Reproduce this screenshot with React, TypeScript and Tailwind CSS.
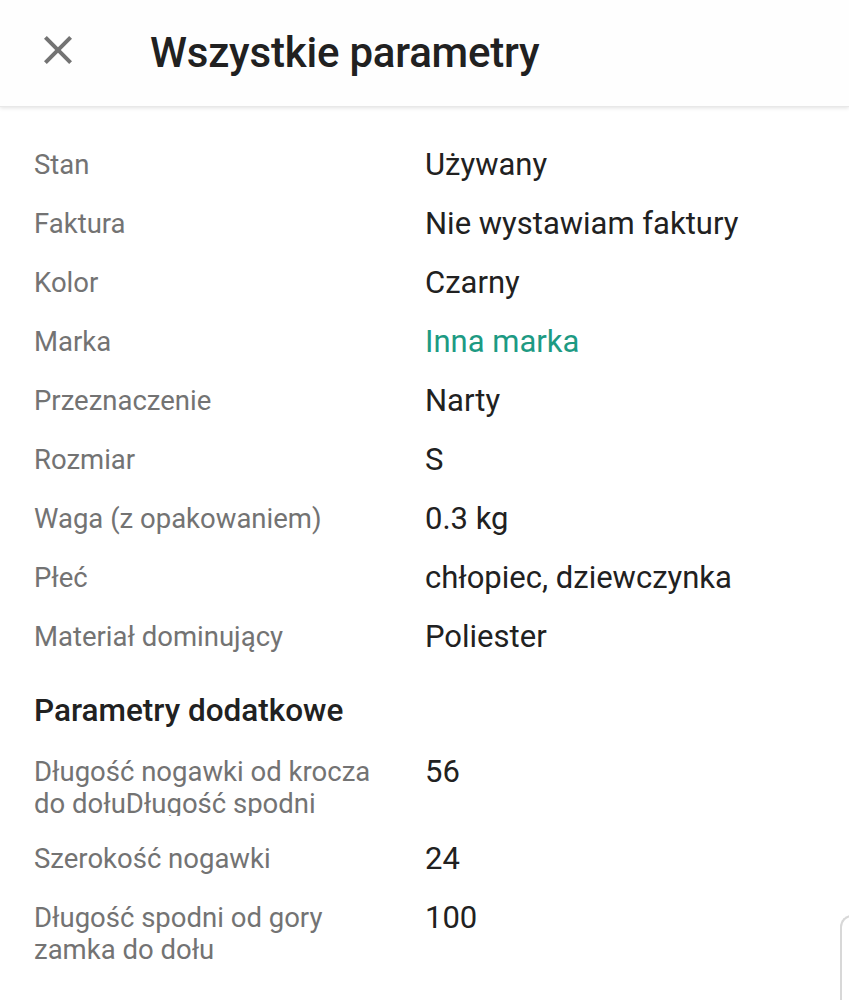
import React from "react";

type Param = { label: string; value: string; link?: boolean };

const MAIN: Param[] = [
  { label: "Stan", value: "Używany" },
  { label: "Faktura", value: "Nie wystawiam faktury" },
  { label: "Kolor", value: "Czarny" },
  { label: "Marka", value: "Inna marka", link: true },
  { label: "Przeznaczenie", value: "Narty" },
  { label: "Rozmiar", value: "S" },
  { label: "Waga (z opakowaniem)", value: "0.3 kg" },
  { label: "Płeć", value: "chłopiec, dziewczynka" },
  { label: "Materiał dominujący", value: "Poliester" },
];

const EXTRA: Param[] = [
  { label: "Długość nogawki od krocza do dołuDługość spodni", value: "56" },
  { label: "Szerokość nogawki", value: "24" },
  { label: "Długość spodni od gory zamka do dołu", value: "100" },
];

function Row({ p }: { p: Param }) {
  return (
    <div className="flex items-start pt-[14px] pb-[13px] leading-[32px]">
      <div className="w-[425px] shrink-0 pl-[34px] pr-[40px] text-[27.5px] text-[#737373] max-h-[60px] overflow-hidden">
        {p.label}
      </div>
      <div className={`text-[31px] ${p.link ? "text-[#1d9a83]" : "text-[#212121]"}`}>{p.value}</div>
    </div>
  );
}

export default function App() {
  return (
    <div
      className="relative w-[849px] h-[1000px] overflow-hidden bg-white"
      style={{ fontFamily: "Roboto, 'Noto Sans', sans-serif" }}
    >
      <header className="relative z-10 h-[107px] flex items-center bg-[#fefefe] shadow-[0_1px_4px_rgba(0,0,0,0.12)] border-b border-[#e8e8e8]">
        <button className="ml-[34px] w-[48px] h-[48px] flex items-center justify-center -mt-[6px]">
          <svg width="48" height="48" viewBox="0 0 24 24" fill="#737373">
            <path d="M19 6.41 17.59 5 12 10.59 6.41 5 5 6.41 10.59 12 5 17.59 6.41 19 12 13.41 17.59 19 19 17.59 13.41 12z" />
          </svg>
        </button>
        <h1 className="ml-[68px] -mt-[2px] text-[42px] font-medium text-[#212121] tracking-[-0.2px]">
          Wszystkie parametry
        </h1>
      </header>

      <main className="pt-[28px]">
        {MAIN.map((p) => (
          <Row key={p.label} p={p} />
        ))}
        <h2 className="pl-[34px] pt-[29px] pb-[15px] text-[31.5px] leading-[32px] font-medium text-[#212121]">
          Parametry dodatkowe
        </h2>
        {EXTRA.map((p) => (
          <Row key={p.label} p={p} />
        ))}
      </main>

      <div className="absolute left-[840px] top-[915px] w-[40px] h-[120px] rounded-tl-[12px] border-l-2 border-t-2 border-[#d8d8d8] bg-white" />
    </div>
  );
}
